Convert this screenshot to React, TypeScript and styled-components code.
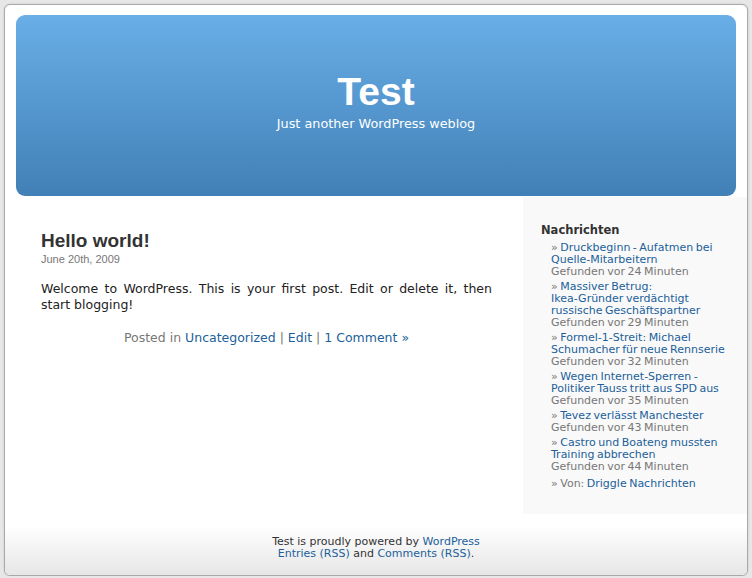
import React from 'react';
import styled, { createGlobalStyle } from 'styled-components';

const GlobalStyle = createGlobalStyle`
  html, body {
    margin: 0;
    padding: 0;
    background: #e7e7e7;
    font-family: "DejaVu Sans", Verdana, sans-serif;
    color: #333;
  }
  a {
    color: #215f9a;
    text-decoration: none;
  }
`;

type NewsItem = {
  title: string
  found: string
}

const news: NewsItem[] = [
  { title: 'Druckbeginn - Aufatmen bei Quelle-Mitarbeitern', found: 'Gefunden vor 24 Minuten' },
  { title: 'Massiver Betrug: Ikea-Gründer verdächtigt russische Geschäftspartner', found: 'Gefunden vor 29 Minuten' },
  { title: 'Formel-1-Streit: Michael Schumacher für neue Rennserie', found: 'Gefunden vor 32 Minuten' },
  { title: 'Wegen Internet-Sperren - Politiker Tauss tritt aus SPD aus', found: 'Gefunden vor 35 Minuten' },
  { title: 'Tevez verlässt Manchester', found: 'Gefunden vor 43 Minuten' },
  { title: 'Castro und Boateng mussten Training abbrechen', found: 'Gefunden vor 44 Minuten' },
];

// hyphenated words stay whole, as in the old browser
function Title({ text }: { text: string }) {
  return (
    <a href="#">
      {text.split(' ').map((w, i) => (
        <React.Fragment key={i}>
          {i > 0 && ' '}
          {w.includes('-') && w.length > 1 ? <NoWrap>{w}</NoWrap> : w}
        </React.Fragment>
      ))}
    </a>
  );
}

export default function App() {
  return (
    <>
      <GlobalStyle />
      <Page>
        <Header>
          <BlogTitle>Test</BlogTitle>
          <Tagline>Just another WordPress weblog</Tagline>
        </Header>
        <Columns>
          <Main>
            <PostTitle>Hello world!</PostTitle>
            <PostDate>June 20th, 2009</PostDate>
            <Entry>
              Welcome to WordPress. This is your first post. Edit or delete it, then start blogging!
            </Entry>
            <PostMeta>
              Posted in <a href="#">Uncategorized</a> | <a href="#">Edit</a> | <a href="#">1 Comment »</a>
            </PostMeta>
          </Main>
          <Sidebar>
            <WidgetTitle>Nachrichten</WidgetTitle>
            <NewsList>
              {news.map((n) => (
                <NewsEntry key={n.title}>
                  <Raquo>» </Raquo>
                  <Title text={n.title} />
                  <Found>{n.found}</Found>
                </NewsEntry>
              ))}
              <Source>
                <Raquo>» Von: </Raquo>
                <a href="#">Driggle Nachrichten</a>
              </Source>
            </NewsList>
          </Sidebar>
        </Columns>
        <Footer>
          Test is proudly powered by <a href="#">WordPress</a>
          <br />
          <a href="#">Entries (RSS)</a> and <a href="#">Comments (RSS)</a>.
        </Footer>
      </Page>
    </>
  );
}

const Page = styled.div`
  margin: 4px 4px 0;
  background: #fff;
  border: 1px solid #a9a9a9;
  border-radius: 6px;
  overflow: hidden;
  box-shadow: 0 0 2px rgba(0, 0, 0, 0.15);
`;

const Header = styled.div`
  margin: 10px 11px 0;
  height: 181px;
  box-sizing: border-box;
  padding-top: 57px;
  border-radius: 9px;
  background: linear-gradient(#69aee7, #4180b6);
  text-align: center;
  color: #fff;
`;

const BlogTitle = styled.h1`
  margin: 0;
  font-family: "Liberation Sans", Arial, sans-serif;
  font-weight: bold;
  font-size: 39px;
  line-height: 40px;
`;

const Tagline = styled.div`
  margin-top: 5px;
  font-size: 12.8px;
  line-height: 14px;
`;

const Columns = styled.div`
  display: flex;
  margin-top: 1px;
`;

const Main = styled.div`
  flex: 1;
  padding: 32px 31px 0 36px;
`;

const PostTitle = styled.h2`
  margin: 0;
  font-family: "Liberation Sans", Arial, sans-serif;
  font-size: 19px;
  line-height: 23px;
  font-weight: bold;
  color: #333;
`;

const PostDate = styled.div`
  margin-top: 1px;
  font-family: "Liberation Sans", Arial, sans-serif;
  font-size: 11px;
  line-height: 13px;
  color: #777;
`;

const Entry = styled.p`
  margin: 15px 0 0;
  font-size: 12.5px;
  line-height: 16px;
  text-align: justify;
  color: #222;
`;

const PostMeta = styled.p`
  margin: 17px 0 0;
  font-size: 12.5px;
  line-height: 16px;
  text-align: center;
  color: #777;
`;

const Sidebar = styled.div`
  width: 191px;
  padding: 26px 15px 24px 18px;
  background: #f9f9f9;
`;

const WidgetTitle = styled.h2`
  margin: 0;
  font-size: 11.5px;
  line-height: 15px;
  font-weight: bold;
  color: #333;
`;

const NewsList = styled.ul`
  list-style: none;
  width: 175.5px;
  margin: 4px 0 0;
  padding: 0 0 0 10px;
  font-size: 11px;
  line-height: 12px;
  word-spacing: -1px;
`;

const NoWrap = styled.span`
  white-space: nowrap;
`;

const NewsEntry = styled.li`
  margin-bottom: 3px;
`;

const Raquo = styled.span`
  color: #777;
`;

const Found = styled.div`
  color: #777;
`;

const Source = styled.li`
  margin-top: 5px;
`;

const Footer = styled.div`
  padding: 22px 0 15px;
  text-align: center;
  font-size: 11px;
  line-height: 12px;
  color: #333;
  background: linear-gradient(#fff 0%, #fff 20%, #e6e6e6 100%);
`;
